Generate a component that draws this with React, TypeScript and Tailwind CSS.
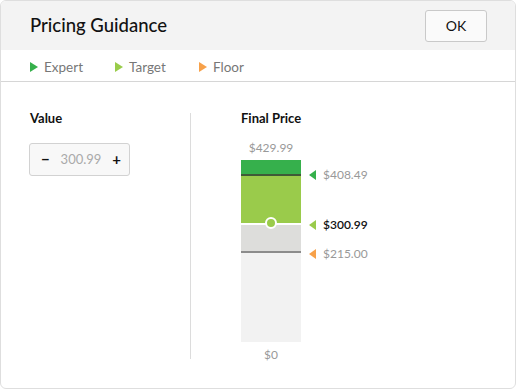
import React from 'react';

const font = { fontFamily: 'Lato, "Open Sans", sans-serif' };

function Tri({ color, dir = 'right' }: { color: string; dir?: 'right' | 'left' }) {
  return dir === 'right' ? (
    <svg width="8" height="10" viewBox="0 0 8 10" className="shrink-0">
      <polygon points="0,0 8,5 0,10" fill={color} />
    </svg>
  ) : (
    <svg width="7" height="10" viewBox="0 0 7 10" className="shrink-0">
      <polygon points="7,0 0,5 7,10" fill={color} />
    </svg>
  );
}

const legend = [
  { label: 'Expert', color: '#35b04b', w: 'w-[85px]' },
  { label: 'Target', color: '#99cc4a', w: 'w-[84px]' },
  { label: 'Floor', color: '#f7a14a', w: 'w-[60px]' },
];

export default function App() {
  return (
    <div style={font} className="w-[516px] h-[389px] bg-white">
      <div className="w-[516px] h-[389px] rounded-[6px] border border-[#dedede] overflow-hidden flex flex-col">
        {/* Header */}
        <div className="h-[49px] shrink-0 bg-[#f3f3f3] flex items-center justify-between pl-[29px] pr-[28px]">
          <h2 className="text-[18.5px] text-[#111] font-medium">Pricing Guidance</h2>
          <button className="w-[62px] h-[32px] border border-[#c9c9c9] rounded-[3px] bg-[#fafafa] text-[14px] text-[#111]">
            OK
          </button>
        </div>

        {/* Legend */}
        <div className="h-[32px] shrink-0 border-b border-[#d6d6d6] flex items-center pt-[3px] pl-[29px]">
          {legend.map((l) => (
            <div key={l.label} className={`${l.w} flex items-center gap-[6px]`}>
              <Tri color={l.color} />
              <span className="text-[13.5px] text-[#777]">{l.label}</span>
            </div>
          ))}
        </div>

        {/* Body */}
        <div className="flex pt-[28px]">
          <div className="w-[189px] pl-[29px] flex flex-col">
            <div className="text-[13px] leading-[16px] font-bold text-[#111]">Value</div>
            <div className="-ml-px mt-[17px] w-[101px] h-[33px] border border-[#d2d2d2] rounded-[3px] bg-[#f8f8f8] flex items-center justify-between pl-[11px] pr-[8px]">
              <span className="text-[15px] font-bold text-[#111] leading-none">−</span>
              <span className="text-[13px] text-[#aaa]">300.99</span>
              <span className="text-[15px] font-bold text-[#111] leading-none">+</span>
            </div>
          </div>

          <div className="w-px h-[246px] mt-[3px] bg-[#dcdcdc]" />

          <div className="pl-[50px] flex flex-col">
            <div className="text-[13px] leading-[16px] font-bold text-[#111]">Final Price</div>
            <div className="w-[60px] mt-[15px] text-center text-[12px] leading-[14px] text-[#999]">$429.99</div>
            <div className="relative w-[60px] mt-[5px] flex flex-col">
              <div className="h-[14px] bg-[#36b04c]" />
              <div className="h-[2px] bg-[#3f5a37]" />
              <div className="h-[47px] bg-[#9acb4b]" />
              <div className="h-[2px] bg-white" />
              <div className="h-[26px] bg-[#dddddb]" />
              <div className="h-[2px] bg-[#8c8c8c]" />
              <div className="h-[89px] bg-[#f2f2f2] bg-[radial-gradient(#f8f8f8_0.6px,transparent_0.7px)] bg-[size:4px_4px]" />

              {/* handle */}
              <div className="absolute left-[24px] top-[57px] w-[12px] h-[12px] rounded-full border-2 border-white bg-[#9acb4b]" />

              {/* markers */}
              <div className="absolute left-[68px] top-[8px] flex items-center gap-[7px] whitespace-nowrap">
                <Tri color="#35b04b" dir="left" />
                <span className="text-[12px] leading-[14px] text-[#999]">$408.49</span>
              </div>
              <div className="absolute left-[68px] top-[58px] flex items-center gap-[7px] whitespace-nowrap">
                <Tri color="#9acb4b" dir="left" />
                <span className="text-[12px] leading-[14px] text-[#111] font-semibold">$300.99</span>
              </div>
              <div className="absolute left-[68px] top-[87px] flex items-center gap-[7px] whitespace-nowrap">
                <Tri color="#f7a14a" dir="left" />
                <span className="text-[12px] leading-[14px] text-[#999]">$215.00</span>
              </div>
            </div>
            <div className="w-[60px] mt-[6px] text-center text-[12px] leading-[14px] text-[#999]">$0</div>
          </div>
        </div>
      </div>
    </div>
  );
}
